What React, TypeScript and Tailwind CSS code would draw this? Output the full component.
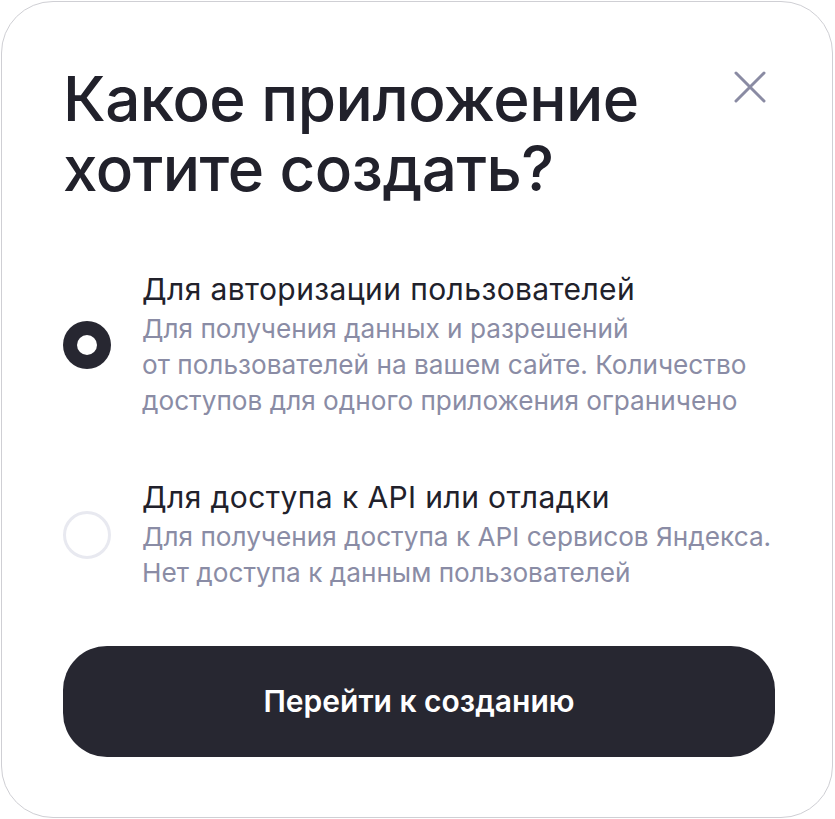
import React, { useState } from "react";

const options = [
  {
    title: "Для авторизации пользователей",
    desc: ["Для получения данных и разрешений", "от пользователей на вашем сайте. Количество", "доступов для одного приложения ограничено"],
  },
  {
    title: "Для доступа к API или отладки",
    desc: ["Для получения доступа к API сервисов Яндекса.", "Нет доступа к данным пользователей"],
  },
];

export default function App() {
  const [sel, setSel] = useState(0);
  return (
    <div className="w-[835px] h-[819px] bg-white p-px" style={{ fontFamily: "Inter, 'Noto Sans', sans-serif" }}>
      <div className="w-[832px] h-[817px] rounded-[52px] border border-[#cfcfd4] bg-white pl-[61px] pr-[58px] pt-[62px] flex flex-col">
        <div className="flex justify-between items-start">
          <h1 className="text-[62px] leading-[70px] font-medium text-[#21212b] tracking-[-0.5px]">
            Какое приложение
            <br />
            хотите создать?
          </h1>
          <button className="mt-[5px] mr-[6px] w-[36px] h-[36px] flex items-center justify-center">
            <svg width="32" height="32" viewBox="0 0 32 32" fill="none">
              <path d="M2 2L30 30M30 2L2 30" stroke="#8a8ba3" strokeWidth="3" strokeLinecap="round" />
            </svg>
          </button>
        </div>
        <div className="mt-[67px] flex flex-col gap-[60px]">
          {options.map((o, i) => (
            <div key={i} className="flex items-center gap-[31px] cursor-pointer" onClick={() => setSel(i)}>
              {sel === i ? (
                <div className="w-[48px] h-[48px] rounded-full bg-[#272731] flex items-center justify-center shrink-0">
                  <div className="w-[20px] h-[20px] rounded-full bg-white" />
                </div>
              ) : (
                <div className="w-[48px] h-[48px] rounded-full border-[3px] border-[#e8e9f0] shrink-0" />
              )}
              <div className="flex flex-col whitespace-nowrap">
                <div className="text-[30px] leading-[36px] tracking-[0.4px] text-[#21212b]">{o.title}</div>
                <div className="mt-[4px] text-[26.2px] leading-[36px] text-[#8a8ca5]">
                  {o.desc.map((d, j) => (
                    <div key={j}>{d}</div>
                  ))}
                </div>
              </div>
            </div>
          ))}
        </div>
        <button className="mt-[55px] w-[712px] h-[111px] rounded-[44px] bg-[#272731] text-white text-[30px] font-semibold">
          Перейти к созданию
        </button>
      </div>
    </div>
  );
}
